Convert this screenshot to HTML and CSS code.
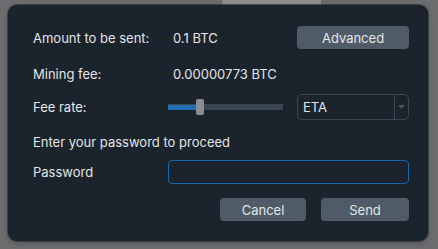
FILE: index.html
```html
<!DOCTYPE html>
<html>
<head>
<meta charset="utf-8">
<link rel="stylesheet" href="styles.css">
</head>
<body>
<div class="backdrop">
  <div class="behind"><div class="max-btn">Max</div></div>
  <div class="dialog">
    <div class="row row-amount">
      <div class="label">Amount to be sent:</div>
      <div class="value">0.1 BTC</div>
      <button class="btn">Advanced</button>
    </div>
    <div class="row row-fee">
      <div class="label">Mining fee:</div>
      <div class="value">0.00000773 BTC</div>
    </div>
    <div class="row row-rate">
      <div class="label">Fee rate:</div>
      <div class="slider">
        <div class="track"><div class="fill"></div><div class="handle"></div></div>
      </div>
      <div class="combo">
        <span class="combo-text">ETA</span>
        <span class="combo-arrow"><svg width="7" height="4" viewBox="0 0 7 4"><path d="M0 0h7L3.5 4z" fill="#4d5760"/></svg></span>
      </div>
    </div>
    <div class="row row-hint">
      <div class="hint">Enter your password to proceed</div>
    </div>
    <div class="row row-pass">
      <div class="label">Password</div>
      <input class="input" type="password">
    </div>
    <div class="row row-actions">
      <button class="btn btn-cancel">Cancel</button>
      <button class="btn btn-send">Send</button>
    </div>
  </div>
</div>
</body>
</html>
```
FILE: styles.css
```css
html, body {
  margin: 0;
  padding: 0;
}
body {
  width: 438px;
  height: 249px;
  background: #6b6d6f;
  font-family: Inter, "Liberation Sans", sans-serif;
  font-size: 13px;
  color: #e3e5e7;
  overflow: hidden;
}
.backdrop {
  display: flex;
  flex-direction: column;
}
.behind {
  height: 5px;
  overflow: hidden;
}
.max-btn {
  width: 99px;
  height: 22px;
  margin-left: 222px;
  margin-top: -17px;
  background: #8b8d8f;
  color: #c5c7c9;
  text-align: center;
  line-height: 22px;
  font-size: 13px;
}
.dialog {
  margin-left: 8px;
  width: 420px;
  height: 236px;
  box-sizing: border-box;
  background: #1b232d;
  border-radius: 9px;
  box-shadow: 0 0 0 1px rgba(40, 44, 48, 0.6), 0 2px 6px rgba(0, 0, 0, 0.25);
  padding: 0 19px 0 25px;
  display: flex;
  flex-direction: column;
}
.row {
  display: grid;
  grid-template-columns: 135px 129px 112px;
  align-items: center;
}
.row-amount { margin-top: 21px; height: 23px; }
.row-fee { margin-top: 15px; height: 20px; }
.row-rate { margin-top: 10px; height: 26px; }
.row-hint { margin-top: 13px; height: 18px; display: flex; }
.row-pass { margin-top: 9px; height: 24px; grid-template-columns: 135px 241px; }
.row-actions {
  margin-top: 14px;
  height: 23px;
  display: flex;
  justify-content: flex-end;
  gap: 15px;
}
.label, .hint {
  white-space: nowrap;
}
.value {
  padding-left: 5px;
  white-space: nowrap;
}
.btn {
  font-family: inherit;
  font-size: 13px;
  color: #e3e5e7;
  background: #4f5c67;
  border: none;
  border-radius: 4px;
  height: 23px;
  padding: 0;
  margin: 0;
}
.row-amount .btn { grid-column: 3; width: 112px; }
.btn-cancel { width: 86px; }
.btn-send { width: 88px; }
.slider {
  display: flex;
  align-items: center;
  width: 115px;
}
.track {
  position: relative;
  width: 115px;
  height: 6px;
  background: #3a4751;
  display: flex;
}
.fill {
  width: 28px;
  height: 5px;
  background: #1f6db2;
  margin-top: 0.5px;
}
.handle {
  position: absolute;
  left: 28px;
  top: -5px;
  width: 8px;
  height: 16px;
  background: #8a8d91;
  border-radius: 2px;
}
.combo {
  box-sizing: border-box;
  height: 26px;
  border: 1px solid #3a4752;
  border-radius: 5px;
  display: flex;
  align-items: stretch;
}
.combo-text {
  flex: 1;
  padding-left: 5px;
  display: flex;
  align-items: center;
  font-size: 13px;
}
.combo-arrow {
  width: 13px;
  border-left: 1px solid #3a4752;
  display: flex;
  align-items: center;
  justify-content: center;
}
.input {
  box-sizing: border-box;
  width: 241px;
  height: 24px;
  margin: 0;
  background: #1b232d;
  border: 1px solid #1a66aa;
  border-radius: 4px;
  outline: none;
}
```
